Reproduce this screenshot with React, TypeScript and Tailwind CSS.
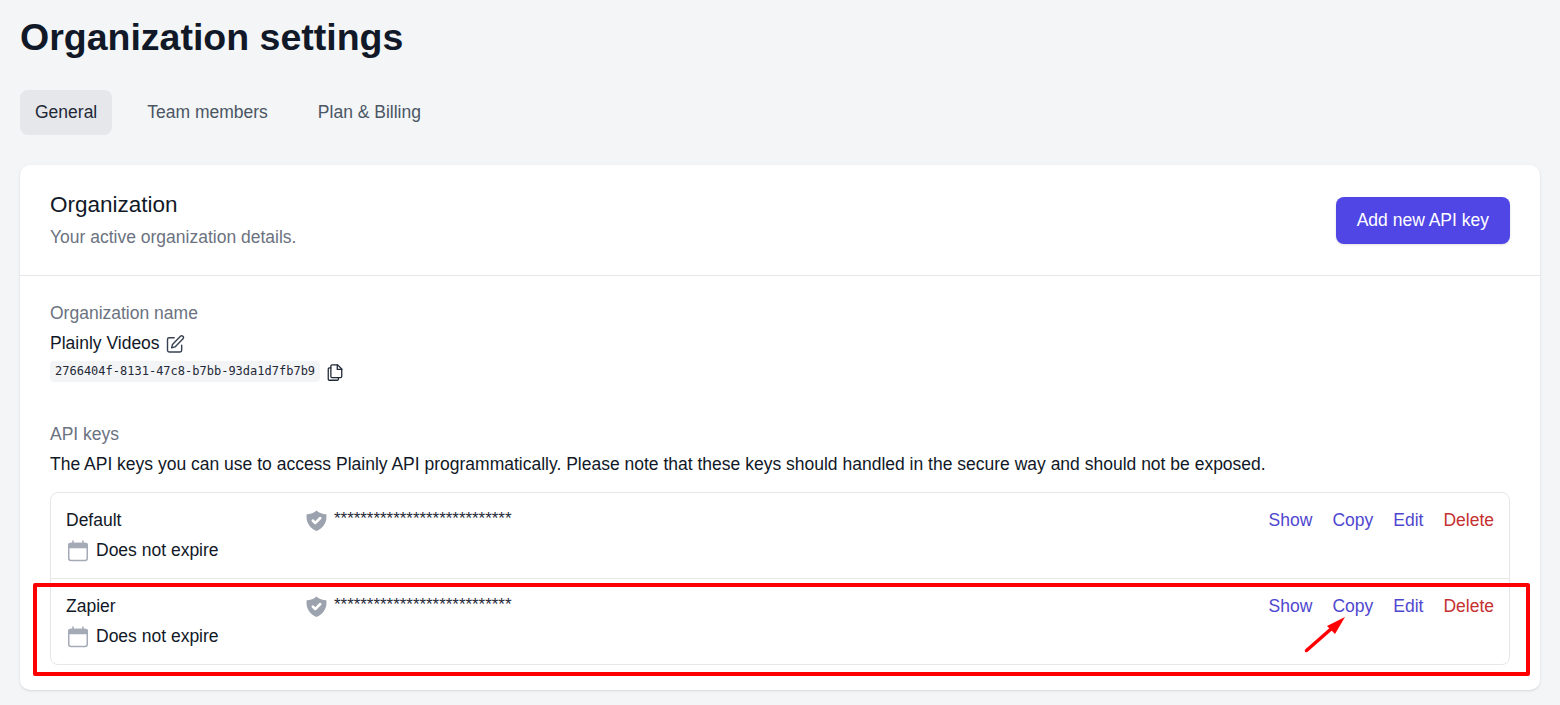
import { useState } from 'react';

const FONT = "font-['Liberation_Sans',Arial,sans-serif]";

const API_KEYS = [
  { id: 'default', name: 'Default' },
  { id: 'zapier', name: 'Zapier' },
];

function ShieldIcon() {
  return (
    <svg viewBox="0 0 20 20" fill="currentColor" className="w-[25px] h-[25px] text-[#9ca3af] shrink-0">
      <path
        fillRule="evenodd"
        clipRule="evenodd"
        d="M2.166 4.999A11.954 11.954 0 0010 1.944 11.954 11.954 0 0017.834 5c.11.65.166 1.32.166 2.001 0 5.225-3.34 9.67-8 11.317C5.34 16.67 2 12.225 2 7c0-.682.057-1.35.166-2.001zm11.541 3.708a1 1 0 00-1.414-1.414L9 10.586 7.707 9.293a1 1 0 00-1.414 1.414l2 2a1 1 0 001.414 0l4-4z"
      />
    </svg>
  );
}

function CalendarIcon() {
  return (
    <svg viewBox="0 0 24 24" className="w-[24px] h-[24px] text-[#a5abb6] shrink-0" fill="none" stroke="currentColor" strokeWidth="1.5">
      <rect x="2.750" y="4.500" width="18.500" height="17" rx="2.200" />
      <path d="M2.750 6a1.500 1.500 0 011.500-1.500h15.500a1.500 1.500 0 011.500 1.500v2.500h-18.500z" fill="currentColor" />
      <path d="M7 2v2.500M17 2v2.500" strokeLinecap="round" />
    </svg>
  );
}

function EditIcon() {
  return (
    <svg viewBox="0 0 24 24" fill="none" stroke="currentColor" strokeWidth="1.700" strokeLinecap="round" strokeLinejoin="round" className="w-[20px] h-[20px] text-[#374151]">
      <path d="M11 4.500H5a2 2 0 00-2 2v13a2 2 0 002 2h13a2 2 0 002-2v-6" />
      <path d="M18.500 2.700a2.200 2.200 0 013.100 3.100L12 15.500l-4 1 1-4z" />
    </svg>
  );
}

function CopyIcon() {
  return (
    <svg viewBox="0 0 24 24" fill="none" stroke="currentColor" strokeWidth="1.700" strokeLinecap="round" strokeLinejoin="round" className="w-[18px] h-[18px] text-[#1f2937]">
      <path d="M8 2.500h7.500L21 8v10a1.500 1.500 0 01-1.500 1.500H8A1.500 1.500 0 016.500 18V4A1.500 1.500 0 018 2.500z" />
      <path d="M15 2.500V8.500h6" />
      <path d="M6.500 6.500H4.500A1.500 1.500 0 003 8v13.500A1.500 1.500 0 004.500 23H15a1.500 1.500 0 001.500-1.500v-2" />
    </svg>
  );
}

function KeyRow({ name, last }: { name: string; last: boolean }) {
  return (
    <li className={`flex px-[15px] pt-[15px] ${last ? 'h-[85px]' : 'h-[86px] border-b border-[#e5e7eb]'}`}>
      <div className="w-[240px] shrink-0">
        <div className="text-[17.500px] leading-[25px] text-[#111827]">{name}</div>
        <div className="flex items-center gap-[6px] mt-[5px] text-[17.500px] leading-[25px] text-[#111827]">
          <CalendarIcon />
          Does not expire
        </div>
      </div>
      <div className="flex items-start gap-[5px] flex-1 -ml-[2px]">
        <ShieldIcon />
        <span className="text-[16.900px] leading-[22px] text-[#1f2937]">***************************</span>
      </div>
      <div className="flex gap-[20px] text-[17.500px] leading-[25px]">
        <a className="text-[#4f46cf]" href="#">Show</a>
        <a className="text-[#4f46cf]" href="#">Copy</a>
        <a className="text-[#4f46cf]" href="#">Edit</a>
        <a className="text-[#c53030]" href="#">Delete</a>
      </div>
    </li>
  );
}

export default function App() {
  const [activeTab, setActiveTab] = useState('General');

  return (
    <div className={`${FONT} relative h-[705px] overflow-hidden bg-[#f3f5f7] px-5 pt-[16px]`}>
      <h1 className="text-[37.500px] leading-[42px] font-bold text-[#111827]">Organization settings</h1>

      <nav className="flex gap-[20px] mt-[32px]">
        {['General', 'Team members', 'Plan & Billing'].map((tab) => (
          <button
            key={tab}
            onClick={() => setActiveTab(tab)}
            className={`h-[45px] px-[15px] rounded-lg text-[17.500px] ${
              activeTab === tab ? 'bg-[#e5e7eb] text-[#1f2937]' : 'text-[#4b5563]'
            }`}
          >
            {tab}
          </button>
        ))}
      </nav>

      <section className="mt-[30px] bg-white rounded-[10px] shadow-sm">
        <header className="flex items-center justify-between h-[111px] px-[30px] border-b border-[#e5e7eb]">
          <div>
            <h2 className="text-[22.500px] leading-[30px] -mt-[1px] text-[#111827]">Organization</h2>
            <p className="text-[17.500px] leading-[25px] mt-[5px] text-[#6b7280]">Your active organization details.</p>
          </div>
          <button className="h-[47px] px-[21px] rounded-lg bg-[#4f46e5] text-white text-[17.500px] font-medium shadow-sm">
            Add new API key
          </button>
        </header>

        <div className="px-[30px] pt-[25px] pb-[25px]">
          <div className="text-[17.500px] leading-[25px] text-[#6b7280]">Organization name</div>
          <div className="flex items-center gap-[5px] mt-[5px] text-[17.500px] leading-[25px] text-[#111827]">
            Plainly Videos
            <EditIcon />
          </div>
          <div className="flex items-center gap-[6px] mt-[5px]">
            <code className="font-['DejaVu_Sans_Mono',monospace] text-[12px] leading-[21px] px-[5px] rounded bg-[#f3f4f6] text-[#1f2937]">
              2766404f-8131-47c8-b7bb-93da1d7fb7b9
            </code>
            <CopyIcon />
          </div>

          <div className="text-[17.500px] leading-[25px] text-[#6b7280] mt-[40px]">API keys</div>
          <p className="text-[17.500px] leading-[25px] mt-[5px] text-[#111827]">
            The API keys you can use to access Plainly API programmatically. Please note that these keys should handled in the secure way and should not be exposed.
          </p>

          <ul className="mt-[15px] border border-[#e5e7eb] rounded-lg">
            {API_KEYS.map((key, i) => (
              <KeyRow key={key.id} name={key.name} last={i === API_KEYS.length - 1} />
            ))}
          </ul>
        </div>
      </section>

      {/* annotation over the screenshot */}
      <div className="absolute left-[33px] top-[583px] w-[1497px] h-[93px] border-[4px] border-[#ff0000] rounded-[2px] pointer-events-none" />
      <svg className="absolute left-[1300px] top-[612px] w-[50px] h-[44px] pointer-events-none" viewBox="0 0 50 44">
        <path d="M6.500 38.500L31 17" stroke="#ff0000" strokeWidth="3.500" strokeLinecap="round" />
        <path d="M45 5L27 14L35 22Z" fill="#ff0000" />
      </svg>
    </div>
  );
}
